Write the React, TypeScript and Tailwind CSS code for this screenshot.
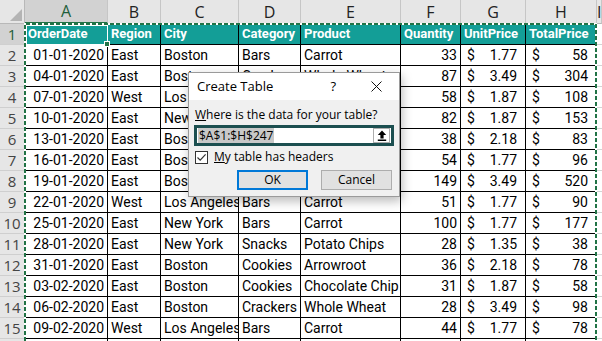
import React from "react";

type Row = [string, string, string, string, string, number, number, number];

const rows: Row[] = [
  ["01-01-2020", "East", "Boston", "Bars", "Carrot", 33, 1.77, 58],
  ["04-01-2020", "East", "Boston", "Crackers", "Whole Wheat", 87, 3.49, 304],
  ["07-01-2020", "West", "Los Angeles", "Cookies", "Chocolate Chip", 58, 1.87, 108],
  ["10-01-2020", "East", "New York", "Cookies", "Chocolate Chip", 82, 1.87, 153],
  ["13-01-2020", "East", "Boston", "Cookies", "Arrowroot", 38, 2.18, 83],
  ["16-01-2020", "East", "Boston", "Bars", "Carrot", 54, 1.77, 96],
  ["19-01-2020", "East", "Boston", "Crackers", "Whole Wheat", 149, 3.49, 520],
  ["22-01-2020", "West", "Los Angeles", "Bars", "Carrot", 51, 1.77, 90],
  ["25-01-2020", "East", "New York", "Bars", "Carrot", 100, 1.77, 177],
  ["28-01-2020", "East", "New York", "Snacks", "Potato Chips", 28, 1.35, 38],
  ["31-01-2020", "East", "Boston", "Cookies", "Arrowroot", 36, 2.18, 78],
  ["03-02-2020", "East", "Boston", "Cookies", "Chocolate Chip", 31, 1.87, 58],
  ["06-02-2020", "East", "Boston", "Crackers", "Whole Wheat", 28, 3.49, 98],
  ["09-02-2020", "West", "Los Angeles", "Bars", "Carrot", 44, 1.77, 78],
];

const headers = ["OrderDate", "Region", "City", "Category", "Product", "Quantity", "UnitPrice", "TotalPrice"];
const letters = ["A", "B", "C", "D", "E", "F", "G", "H", "I"];

const cellFont = { fontFamily: "Roboto, 'Liberation Sans', sans-serif" };
const uiFont = { fontFamily: "'Open Sans', 'Noto Sans', sans-serif" };

function RowHead({ n, active }: { n?: number; active?: boolean }) {
  return (
    <div
      className={`h-[21px] flex items-center justify-center text-[15px] border-r border-b border-r-[#b8b8b8] border-b-[#cfcfcf] ${
        active ? "bg-[#d2d2d2] text-[#1e5e3a]" : "bg-[#e6e6e6] text-[#444]"
      }`}
      style={uiFont}
    >
      {n}
    </div>
  );
}

function Money({ v, dec }: { v: number; dec: boolean }) {
  return (
    <div className="h-[21px] bg-white border-r border-b border-black flex items-center justify-between pl-[6px] pr-[8px] text-[14px]">
      <span>$</span>
      <span>{dec ? v.toFixed(2) : v}</span>
    </div>
  );
}

function DataRow({ r, n }: { r: Row; n: number }) {
  const cell = "h-[21px] bg-white border-r border-b border-black flex items-center text-[14px] whitespace-nowrap overflow-hidden";
  return (
    <>
      <RowHead n={n} />
      <div className={`${cell} justify-end pr-[3px]`}>{r[0]}</div>
      <div className={`${cell} pl-[3px]`}>{r[1]}</div>
      <div className={`${cell} pl-[3px]`}>{r[2]}</div>
      <div className={`${cell} pl-[3px]`}>{r[3]}</div>
      <div className={`${cell} pl-[3px]`}>{r[4]}</div>
      <div className={`${cell} justify-end pr-[3px]`}>{r[5]}</div>
      <Money v={r[6]} dec />
      <Money v={r[7]} dec={false} />
      <div className="h-[21px] bg-white border-b border-[#d4d4d4]" />
    </>
  );
}

function BlankRow() {
  const cell = "h-[21px] bg-white border-r border-b border-black";
  return (
    <>
      <RowHead />
      {[0, 1, 2, 3, 4, 5, 6, 7].map((k) => (
        <div key={k} className={cell} />
      ))}
      <div className="h-[21px] bg-white border-b border-[#d4d4d4]" />
    </>
  );
}

function CreateTableDialog() {
  return (
    <div
      className="absolute left-[188px] top-[72px] w-[212px] h-[125px] border border-[#9a9a9a] bg-[#f0f0f0] shadow-[2px_4px_10px_rgba(0,0,0,0.28)] flex flex-col text-[12px] text-black"
      style={uiFont}
    >
      <div className="h-[27px] bg-white flex items-center pl-[8px] pr-[17px]">
        <span className="text-[13px] flex-1">Create Table</span>
        <span className="text-[13px] mr-[35px]">?</span>
        <svg width="11" height="11" viewBox="0 0 11 11">
          <path d="M0.5 0.5 L10.5 10.5 M10.5 0.5 L0.5 10.5" stroke="#111" strokeWidth="1" />
        </svg>
      </div>
      <div className="flex flex-col px-[5px] pt-[7px]">
        <div className="leading-[15px] pl-[1px]">
          <span className="underline">W</span>here is the data for your table?
        </div>
        <div className="mt-[3px] h-[21px] border-[3px] border-[#1c4f50] bg-white flex items-center justify-between pl-[1px] pr-[1px]">
          <span className="bg-[#c8c8c8] leading-[15px] px-[1px]">$A$1:$H$247</span>
          <div className="w-[17px] h-[15px] border border-[#adadad] bg-white flex items-center justify-center">
            <svg width="10" height="11" viewBox="0 0 10 11">
              <path d="M5 0.5 L0.8 5 H3.4 V8.5 H6.6 V5 H9.2 Z" fill="#000" />
              <rect x="0.8" y="9.5" width="8.4" height="1.5" fill="#000" />
            </svg>
          </div>
        </div>
        <div className="mt-[4px] flex items-center h-[14px]">
          <div className="w-[13px] h-[13px] border border-[#333] bg-white flex items-center justify-center ml-[1px]">
            <svg width="11" height="11" viewBox="0 0 11 11">
              <path d="M1.5 5.5 L4.2 8.2 L9.6 2.3" stroke="#333" strokeWidth="1.2" fill="none" />
            </svg>
          </div>
          <span className="ml-[6px]">
            <span className="underline">M</span>y table has headers
          </span>
        </div>
        <div className="mt-[6px] flex justify-end gap-[13px] pr-[2px]">
          <div className="w-[71px] h-[20px] border-2 border-[#0078d7] bg-[#e1e1e1] flex items-center justify-center">OK</div>
          <div className="w-[71px] h-[20px] border border-[#adadad] bg-[#e1e1e1] flex items-center justify-center">Cancel</div>
        </div>
      </div>
    </div>
  );
}

export default function App() {
  return (
    <div className="relative w-[602px] h-[341px] overflow-hidden bg-white text-black" style={cellFont}>
      <div className="grid grid-cols-[25px_83px_53px_78px_62px_100px_60px_65px_71px_1fr]">
        {/* column letters */}
        <div className="h-[24px] bg-[#e6e6e6] border-r border-b border-[#b8b8b8] flex items-end justify-end p-[2px]">
          <svg width="12" height="12" viewBox="0 0 12 12">
            <path d="M12 0 L12 12 L0 12 Z" fill="#b4b4b4" />
          </svg>
        </div>
        {letters.map((l, i) => (
          <div
            key={l}
            className={`h-[24px] flex items-center justify-center text-[16px] border-r border-r-[#c6c6c6] ${
              i === 0
                ? "bg-[#d2d2d2] text-[#1e5e3a] border-b-2 border-b-[#217346]"
                : "bg-[#e6e6e6] text-[#222] border-b border-b-[#b8b8b8]"
            }`}
            style={uiFont}
          >
            {l}
          </div>
        ))}

        {/* table header row */}
        <RowHead n={1} active />
        {headers.map((h) => (
          <div
            key={h}
            className="h-[21px] bg-[#139e97] text-white font-bold text-[13px] border-r border-b border-black flex items-center pl-[3px] whitespace-nowrap overflow-hidden"
          >
            {h}
          </div>
        ))}
        <div className="h-[21px] bg-white border-b border-[#d4d4d4]" />

        {rows.map((r, i) => (
          <DataRow key={i} r={r} n={i + 2} />
        ))}
        <BlankRow />
      </div>

      {/* copy range marching ants */}
      <svg className="absolute left-0 top-0" width="602" height="341">
        <path d="M25 341 V24 H596 V341" stroke="#fff" strokeWidth="2" fill="none" />
        <path d="M25 341 V24 H596 V341" stroke="#217346" strokeWidth="2" strokeDasharray="4 2" fill="none" />
      </svg>

      {/* active cell */}
      <div className="absolute left-[26px] top-[25px] w-[82px] h-[20px] border border-white" />
      <div className="absolute left-[104px] top-[41px] w-[6px] h-[6px] bg-[#217346] border border-white" />

      <CreateTableDialog />
    </div>
  );
}
